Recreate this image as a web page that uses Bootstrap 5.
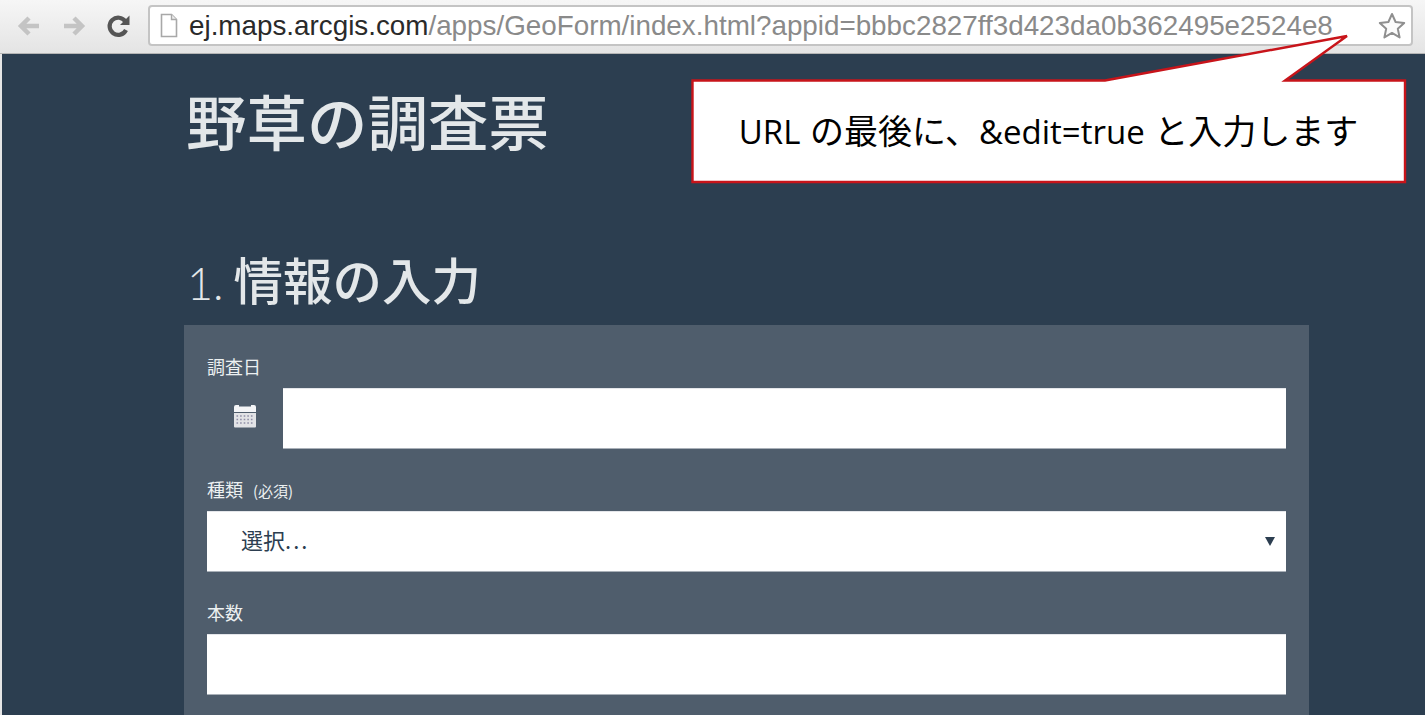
<!DOCTYPE html>
<html lang="ja">
<head>
    <meta charset="UTF-8">
    <meta name="viewport" content="width=device-width, initial-scale=1.0">
    <title>野草の調査票</title>
    <link href="https://cdn.jsdelivr.net/npm/bootstrap@5.3.0/dist/css/bootstrap.min.css" rel="stylesheet">
    <style>
        html, body { height: 715px; overflow: hidden; }
        body { background: #e6e6e6; font-family: "Noto Sans CJK JP", sans-serif; position: relative; }
        .browser-bar { height: 54px; padding: 5px 12px 0 14px; background: linear-gradient(#f6f6f6, #e4e4e4); border-bottom: 1px solid #b5b5b5; }
        .nav-ico { width: 30px; height: 30px; margin: 6px 15px 0 0; flex: none; }
        .nav-ico.reload { margin-right: 14px; }
        .url-box { height: 41px; background: #fff; border: 2px solid #c4c4c4; border-radius: 4px; padding: 0 4px 0 10px; font-family: "Liberation Sans", Arial, sans-serif; font-size: 27.8px; color: #8a8a8a; white-space: nowrap; overflow: hidden; }
        .url-box b { font-weight: 400; color: #2a2a2a; }
        .doc-ico { margin-right: 11px; flex: none; }
        .page-wrap { height: 661px; margin-left: 2px; padding-left: 182px; overflow: hidden; background: #2c3e50; }
        .form-title { font-size: 60.5px; line-height: 1; color: #e3e7e9; font-weight: 500; margin: 36px 0 0 2px; }
        .step-title { font-size: 49.5px; line-height: 1; color: #e3e7e9; font-weight: 500; margin: 103px 0 0 3px; height: 71px; }
        .step-title span { font-family: "Lato", sans-serif; font-weight: 300; font-size: 45px; margin-right: 10px; }
        .form-panel { width: 1125px; height: 400px; background: #4f5d6c; padding: 29px 23px 0; color: #ecf0f1; }
        .fld-label { font-size: 18px; line-height: 24px; height: 24px; margin-bottom: 10px; }
        .fld-label small { font-size: 15px; margin-left: 6px; }
        .fld-input { height: 61px; width: 100%; background: #fff; border: 0; border-radius: 0; padding: 0 34px; font-size: 22px; color: #2c3e50; border-top: 1px solid #e4e6ea; border-bottom: 1px solid #a9b0b8; }
        .fld-input .dots { letter-spacing: 2px; }
        .sel-text { margin-bottom: 4px; }
        .date-ico { width: 76px; flex: none; text-align: center; padding-bottom: 4px; }
        .gap-row { margin-bottom: 28px; }
        .sel-arrow { width: 0; height: 0; border-left: 5px solid transparent; border-right: 5px solid transparent; border-top: 9px solid #2c3e50; margin-right: -23px; }
        .callout-svg { position: absolute; left: 0; top: 0; width: 1425px; height: 200px; pointer-events: none; }
        .callout-text { position: absolute; left: 692px; top: 79px; width: 713px; height: 102px; color: #000; font-family: "Open Sans", "Noto Sans CJK JP", sans-serif; font-size: 33px; line-height: 102px; text-align: center; white-space: nowrap; word-spacing: 1px; }
        .callout-text span { font-family: "Noto Sans CJK JP", sans-serif; font-size: 34px; }
    </style>
</head>
<body>
    <div class="browser-bar d-flex align-items-start">
        <svg class="nav-ico" viewBox="0 0 30 30"><path d="M25 15H8M15 7l-8 8 8 8" fill="none" stroke="#c4c4c4" stroke-width="4.5"/></svg>
        <svg class="nav-ico" viewBox="0 0 30 30"><path d="M5 15h17M15 7l8 8-8 8" fill="none" stroke="#c4c4c4" stroke-width="4.5"/></svg>
        <svg class="nav-ico reload" viewBox="0 0 30 30"><path d="M22 19a8.6 8.6 0 1 1-.6-8.5" fill="none" stroke="#555" stroke-width="4.2"/><path d="M25.5 4.5V14H16z" fill="#555"/></svg>
        <div class="url-box flex-grow-1 d-flex align-items-center">
            <svg class="doc-ico" width="18" height="25" viewBox="0 0 18 25"><path d="M1.5 1.5h10l5 5v17h-15z" fill="#fff" stroke="#a8a8a8" stroke-width="1.6"/><path d="M11.5 1.5v5h5" fill="#eee" stroke="#a8a8a8" stroke-width="1.4"/></svg>
            <span class="flex-grow-1"><b>ej.maps.arcgis.com</b>/apps/GeoForm/index.html?appid=bbbc2827ff3d423da0b362495e2524e8</span>
            <svg width="30" height="30" viewBox="0 0 30 30"><path d="M15 3l3.6 8 8.6.9-6.4 5.9 1.8 8.6L15 21.9 7.4 26.4l1.8-8.6-6.4-5.9 8.6-.9z" fill="#fbfbfb" stroke="#8f8f8f" stroke-width="2" stroke-linejoin="round"/></svg>
        </div>
    </div>

    <div class="page-wrap">
        <h1 class="form-title">野草の調査票</h1>
        <h2 class="step-title"><span>1.</span>情報の入力</h2>
        <div class="form-panel">
            <div class="fld-label">調査日</div>
            <div class="d-flex gap-row">
                <div class="date-ico d-flex align-items-center justify-content-center">
                    <svg width="24" height="24" viewBox="0 0 24 24">
                        <path d="M1 8V3q0-2 2-2h3v1.5h12V1h3q2 0 2 2v5z" fill="#f4f5f7"/>
                        <path d="M1 9h22v13.5q0 1-1 1H2q-1 0-1-1z" fill="#e2e3e6"/>
                        <path d="M3.5 12h17M3.5 15.5h17M3.5 19h17" stroke="#8f8ea6" stroke-width="1.6" stroke-dasharray="1.6 2"/>
                    </svg>
                </div>
                <input class="fld-input flex-grow-1" type="text" aria-label="調査日">
            </div>
            <div class="fld-label">種類 <small>(必須)</small></div>
            <div class="fld-input d-flex align-items-center justify-content-between gap-row">
                <span class="sel-text">選択<span class="dots">...</span></span>
                <span class="sel-arrow"></span>
            </div>
            <div class="fld-label">本数</div>
            <input class="fld-input d-block" type="text" aria-label="本数">
        </div>
    </div>

    <svg class="callout-svg" viewBox="0 0 1425 200"><path d="M692.5 80.5H1105L1347 36 1285 80.5H1405V182H692.5z" fill="#fff" stroke="#c8141a" stroke-width="2.4"/></svg>
    <div class="callout-text">URL <span>の最後に、</span>&amp;edit=true <span>と入力します</span></div>
    <script src="https://cdn.jsdelivr.net/npm/bootstrap@5.3.0/dist/js/bootstrap.bundle.min.js"></script>
</body>
</html>
